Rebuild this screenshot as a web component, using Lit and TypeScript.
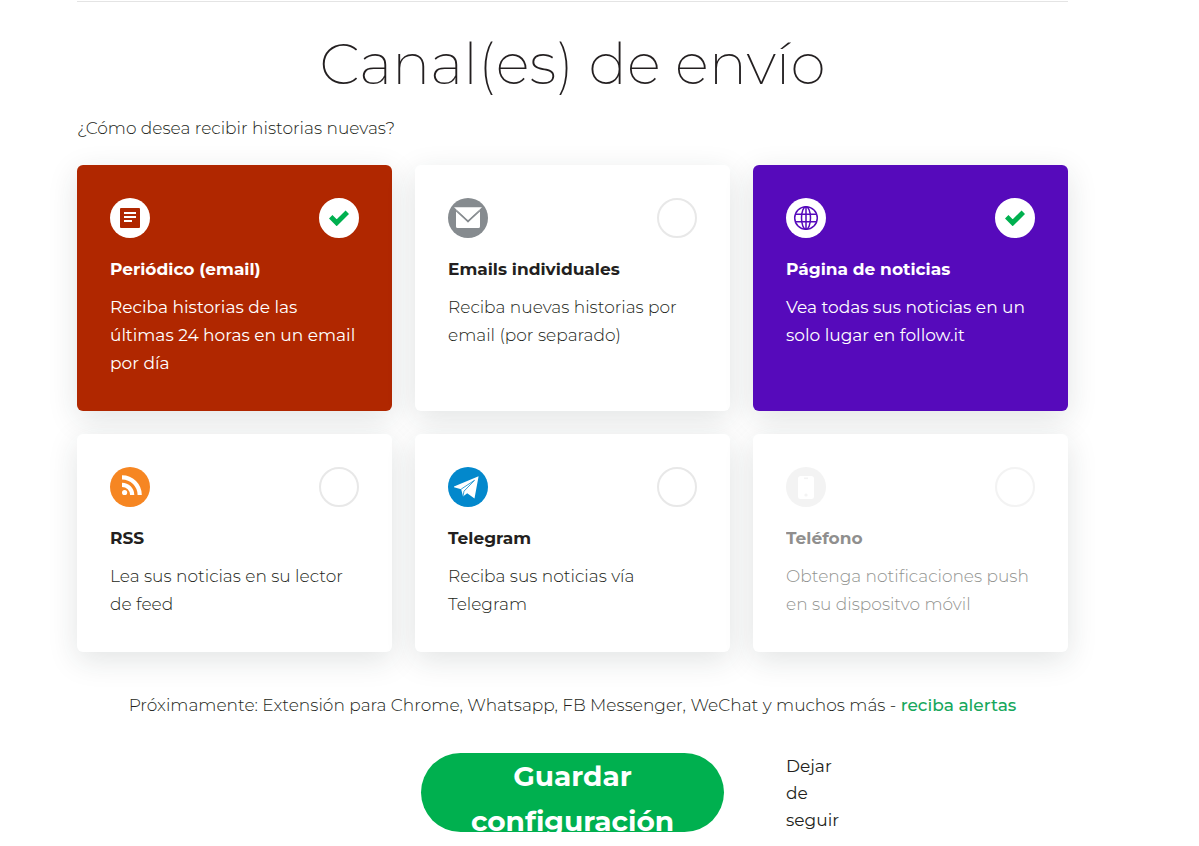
import { LitElement, html, css, svg } from "lit";
import { customElement, property, state } from "lit/decorators.js";

interface Channel {
  id: string;
  title: string;
  text: string;
  tone: string;
  checked: boolean;
  disabled?: boolean;
}

const icons: Record<string, unknown> = {
  newspaper: svg`
    <circle cx="20" cy="20" r="20" fill="#fff"/>
    <rect x="10" y="10" width="20" height="20" rx="1" fill="#b02700"/>
    <path d="M14 15h12M14 19h12M14 23h8" stroke="#fff" stroke-width="2"/>`,
  mail: svg`
    <circle cx="20" cy="20" r="20" fill="#868b8f"/>
    <path d="M8 11.2v17.2q0 1.600 1.600 1.600h20.800q1.600 0 1.600-1.600V11.200L20 24.600z" fill="#fff"/>
    <path d="M6 9.300h28L20 22.300z" fill="#fff"/>
    <path d="M6.500 11.200L20 23.600l13.500-12.400" fill="none" stroke="#868b8f" stroke-width="1.300"/>`,
  globe: svg`
    <circle cx="20" cy="20" r="20" fill="#fff"/>
    <g fill="none" stroke="#560abb" stroke-width="1.500">
      <circle cx="20" cy="20" r="11.300"/>
      <ellipse cx="20" cy="20" rx="4.500" ry="11.300"/>
      <path d="M20 8.700v22.600M9.600 16.200h20.800M9.600 23.800h20.800"/>
    </g>`,
  rss: svg`
    <circle cx="20" cy="20" r="20" fill="#f68622"/>
    <circle cx="14.600" cy="25.500" r="2.600" fill="#fff"/>
    <path d="M12 17.800a10.200 10.200 0 0 1 10.200 10.200M12 10.300A17.700 17.700 0 0 1 29.700 28" fill="none" stroke="#fff" stroke-width="4.200"/>`,
  telegram: svg`
    <circle cx="20" cy="20" r="20" fill="#0388cc"/>
    <path d="M6 19.600L30.600 9.300 26.500 31.400 19.200 26.200 15 29.600 13.200 22.200 6 20.200z" fill="#fff"/>
    <path d="M13.200 22.100L26.500 13.300 16 24.200 15 29.400" fill="none" stroke="#0388cc" stroke-width=".8"/>`,
  phone: svg`
    <circle cx="20" cy="20" r="20" fill="#e8e8e8"/>
    <rect x="12" y="9" width="16" height="23" rx="2.500" fill="#fff"/>
    <path d="M18 11.300h4" stroke="#e8e8e8" stroke-width="1.500"/>
    <circle cx="20" cy="28" r="1.600" fill="#e8e8e8"/>`,
};

@customElement("channel-card")
export class ChannelCard extends LitElement {
  @property({ attribute: false }) channel!: Channel;

  static styles = css`
    :host {
      display: grid;
    }
    .card {
      box-sizing: border-box;
      padding: 33px 33px 34px;
      border-radius: 6px;
      background: #fff;
      color: #231f20;
      box-shadow: 0 8px 30px rgba(30, 50, 45, 0.13);
      cursor: pointer;
    }
    .card.red {
      background: #b02700;
      color: #fff;
    }
    .card.purple {
      background: #560abb;
      color: #fff;
    }
    .body {
      display: block;
    }
    .disabled .body {
      opacity: 0.5;
    }
    .top {
      display: flex;
      justify-content: space-between;
      align-items: center;
      margin-bottom: 17px;
    }
    .icon {
      display: block;
      width: 40px;
      height: 40px;
    }
    .tick {
      display: grid;
      place-items: center;
    }
    .tick > * {
      grid-area: 1 / 1;
    }
    .box {
      appearance: none;
      box-sizing: border-box;
      width: 40px;
      height: 40px;
      margin: 0;
      border: 2px solid #e8e8e8;
      border-radius: 50%;
      background: #fff;
      cursor: inherit;
    }
    .box:checked {
      border-color: #fff;
    }
    .mark {
      width: 20px;
      height: 16px;
      pointer-events: none;
    }
    .title {
      display: block;
      margin-bottom: 10px;
      font-size: 17px;
      line-height: 28px;
      font-weight: 700;
    }
    .text {
      display: block;
      font-size: 17px;
      line-height: 28px;
      font-weight: 300;
    }
    .red .text,
    .purple .text {
      font-weight: 400;
    }
  `;

  private toggle(e: Event) {
    const checked = (e.target as HTMLInputElement).checked;
    this.dispatchEvent(new CustomEvent("channel-toggle", { detail: checked }));
  }

  render() {
    const c = this.channel;
    const tone = c.checked ? c.tone : "";
    return html`
      <label class="card ${tone} ${c.disabled ? "disabled" : ""}" for="box">
        <span class="body">
          <span class="top">
            <svg class="icon" viewBox="0 0 40 40" aria-hidden="true">${icons[c.id]}</svg>
            <span class="tick">
              <input class="box" id="box" type="checkbox" .checked=${c.checked}
                ?disabled=${c.disabled} @change=${this.toggle} />
              ${c.checked
                ? html`<svg class="mark" viewBox="0 0 20 16" aria-hidden="true">
                    <path d="M1.700 6.800l6 6L18.300 2.200" fill="none" stroke="#00b04f" stroke-width="4.900"/>
                  </svg>`
                : ""}
            </span>
          </span>
          <span class="title">${c.title}</span>
          <span class="text">${c.text}</span>
        </span>
      </label>
    `;
  }
}

@customElement("app-root")
export class AppRoot extends LitElement {
  @state() private channels: Channel[] = [
    { id: "newspaper", title: "Periódico (email)", text: "Reciba historias de las últimas 24 horas en un email por día", tone: "red", checked: true },
    { id: "mail", title: "Emails individuales", text: "Reciba nuevas historias por email (por separado)", tone: "", checked: false },
    { id: "globe", title: "Página de noticias", text: "Vea todas sus noticias en un solo lugar en follow.it", tone: "purple", checked: true },
    { id: "rss", title: "RSS", text: "Lea sus noticias en su lector de feed", tone: "", checked: false },
    { id: "telegram", title: "Telegram", text: "Reciba sus noticias vía Telegram", tone: "", checked: false },
    { id: "phone", title: "Teléfono", text: "Obtenga notificaciones push en su dispositvo móvil", tone: "", checked: false, disabled: true },
  ];

  static styles = css`
    :host {
      display: block;
      padding: 1px 131px 14px 77px;
      background: #fff;
      color: #231f20;
      font-family: Montserrat, Inter, sans-serif;
      font-variant-ligatures: none;
    }
    .panel {
      border-top: 1px solid #e4e4e4;
      padding-top: 27px;
    }
    .heading {
      margin: 0 0 15px;
      font-size: 57px;
      line-height: 70px;
      font-weight: 200;
      text-align: center;
    }
    .question {
      margin: 0 0 23px;
      font-size: 17px;
      line-height: 28px;
      font-weight: 300;
    }
    .grid {
      display: grid;
      grid-template-columns: repeat(3, 1fr);
      gap: 23px;
    }
    .soon {
      margin: 39px 0 34px;
      font-size: 17px;
      line-height: 28px;
      font-weight: 300;
      text-align: center;
    }
    .alerts {
      color: #16a75c;
      font-weight: 500;
      text-decoration: none;
    }
    .actions {
      display: grid;
      grid-template-columns: 1fr 303px 1fr;
      column-gap: 62px;
    }
    .save {
      grid-column: 2;
      height: 79px;
      padding: 1px 40px 0;
      overflow: hidden;
      border: 0;
      border-radius: 40px;
      background: #00b04f;
      color: #fff;
      font: inherit;
      font-variant-ligatures: none;
      font-size: 28px;
      line-height: 45px;
      font-weight: 700;
      cursor: pointer;
      display: flex;
      align-items: flex-start;
      justify-content: center;
    }
    .unfollow {
      width: min-content;
      color: inherit;
      font-size: 17px;
      line-height: 27px;
      text-decoration: none;
    }
  `;

  private setChecked(id: string, checked: boolean) {
    this.channels = this.channels.map((c) => (c.id === id ? { ...c, checked } : c));
  }

  render() {
    return html`
      <main class="panel">
        <h1 class="heading">Canal(es) de envío</h1>
        <p class="question">¿Cómo desea recibir historias nuevas?</p>
        <div class="grid">
          ${this.channels.map(
            (c) => html`<channel-card .channel=${c}
              @channel-toggle=${(e: CustomEvent<boolean>) => this.setChecked(c.id, e.detail)}></channel-card>`
          )}
        </div>
        <p class="soon">
          Próximamente: Extensión para Chrome, Whatsapp, FB Messenger, WeChat y muchos más -
          <a class="alerts" href="#alertas">reciba alertas</a>
        </p>
        <div class="actions">
          <button class="save" type="button">Guardar configuración</button>
          <a class="unfollow" href="#dejar">Dejar de seguir</a>
        </div>
      </main>
    `;
  }
}
